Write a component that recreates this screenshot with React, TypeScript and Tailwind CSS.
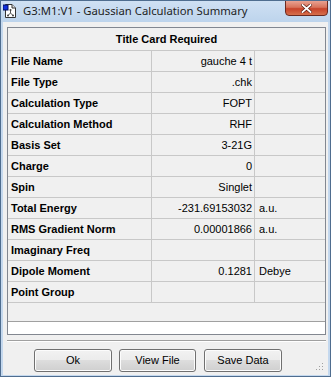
import React from "react";

const rows: [string, string, string][] = [
  ["File Name", "gauche 4 t", ""],
  ["File Type", ".chk", ""],
  ["Calculation Type", "FOPT", ""],
  ["Calculation Method", "RHF", ""],
  ["Basis Set", "3-21G", ""],
  ["Charge", "0", ""],
  ["Spin", "Singlet", ""],
  ["Total Energy", "-231.69153032", "a.u."],
  ["RMS Gradient Norm", "0.00001866", "a.u."],
  ["Imaginary Freq", "", ""],
  ["Dipole Moment", "0.1281", "Debye"],
  ["Point Group", "", ""],
];

const font = { fontFamily: '"Liberation Sans", Arial, sans-serif' };

function Btn({ label, w }: { label: string; w: string }) {
  return (
    <div
      className={`${w} h-[23px] rounded-[3px] border border-[#707070] flex items-center justify-center text-[11px] text-black bg-[linear-gradient(#f2f2f2_0%,#ebebeb_50%,#dddddd_50%,#cfcfcf_100%)] shadow-[inset_0_0_0_1px_#fcfcfc]`}
    >
      {label}
    </div>
  );
}

export default function App() {
  return (
    <div
      className="w-[331px] h-[377px] bg-[#c4d8ee] border border-[#4f6d8f] flex flex-col overflow-hidden"
      style={font}
    >
      {/* Title bar */}
      <div className="h-[21px] flex items-start relative bg-[linear-gradient(#cfe0f3,#bdd4ec)]">
        <svg className="absolute left-[2px] top-[3px]" width="13" height="14" viewBox="0 0 13 14">
          <path d="M2.5 0.5 H9 L12.5 4 V13.5 H2.5 Z" fill="#fff" stroke="#333" />
          <path d="M9 0.5 V4 H12.5" fill="#ddd" stroke="#333" />
          <rect x="0" y="1" width="5" height="5" fill="#1030e0" stroke="#001060" strokeWidth="1" />
          <line x1="7.5" y1="6" x2="7.5" y2="9" stroke="#555" />
          <line x1="7.5" y1="9" x2="5" y2="11.5" stroke="#555" />
          <line x1="7.5" y1="9" x2="10" y2="11.5" stroke="#555" />
          <circle cx="7.5" cy="6" r="1" fill="#444" />
          <circle cx="5" cy="11.5" r="1" fill="#444" />
          <circle cx="10" cy="11.5" r="1" fill="#444" />
        </svg>
        <div
          className="absolute left-[22px] top-[2px] text-[11.3px] leading-[16px] text-[#1e1e1e]"
          style={{ fontFamily: '"Noto Sans", "Open Sans", sans-serif' }}
        >
          G3:M1:V1 - Gaussian Calculation Summary
        </div>
        <div className="absolute left-[284px] top-[-1px] w-[43px] h-[16px] rounded-b-[4px] border border-[#6b2a20] bg-[linear-gradient(#e9a291_0%,#d8735b_45%,#c7432a_55%,#d6704c_100%)] flex items-center justify-center">
          <svg width="11" height="9" viewBox="0 0 11 9">
            <path d="M1.5 1 L9.5 8 M9.5 1 L1.5 8" stroke="#5a1a10" strokeWidth="3.2" strokeLinecap="square" />
            <path d="M1.5 1 L9.5 8 M9.5 1 L1.5 8" stroke="#ffffff" strokeWidth="1.8" strokeLinecap="square" />
          </svg>
        </div>
      </div>

      {/* Client area */}
      <div className="flex-1 mx-[2px] mb-[1px] bg-[#f0f0f0] flex flex-col relative">
        <div className="ml-[4px] mt-[5px] w-[319px] h-[308px] border border-[#828790] flex flex-col">
          <div className="h-[23px] border-b border-[#c8c8c8] flex items-center justify-center font-bold text-[11px] text-black">
            Title Card Required
          </div>
          {rows.map(([a, b, c]) => (
            <div key={a} className="h-[21px] border-b border-[#c8c8c8] flex text-[11px] text-black">
              <div className="w-[144px] border-r border-[#c8c8c8] pl-[3px] flex items-center font-bold">
                {a}
              </div>
              <div className="w-[103px] border-r border-[#c8c8c8] pr-[2px] flex items-center justify-end">
                {b}
              </div>
              <div className="flex-1 pl-[4px] flex items-center">{c}</div>
            </div>
          ))}
          <div className="h-[19px] border-b border-[#a0a0a0]" />
          <div className="flex-1 bg-white" />
        </div>

        <div className="ml-[4px] mt-[5px] w-[319px] h-[2px] border-t border-[#a0a0a0] border-b border-b-white" />

        <div className="flex mt-[7px] ml-[31px]">
          <Btn label="Ok" w="w-[78px]" />
          <div className="w-[7px]" />
          <Btn label="View File" w="w-[77px]" />
          <div className="w-[8px]" />
          <Btn label="Save Data" w="w-[78px]" />
        </div>

        <svg className="absolute right-[4px] bottom-[4px]" width="10" height="10" viewBox="0 0 10 10">
          {[
            [8, 2],
            [5, 5],
            [8, 5],
            [2, 8],
            [5, 8],
            [8, 8],
          ].map(([x, y], i) => (
            <rect key={i} x={x} y={y} width="1" height="1" fill="#a0a0a0" />
          ))}
        </svg>
      </div>
    </div>
  );
}
